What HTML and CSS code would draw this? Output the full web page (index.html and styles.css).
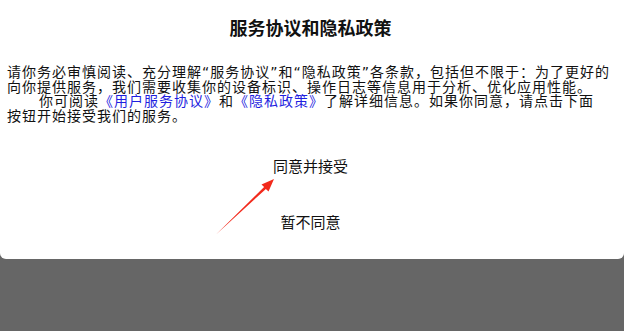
FILE: index.html
```html
<!DOCTYPE html>
<html lang="zh-CN">

<head>
    <meta charset="UTF-8">
    <meta name="viewport" content="width=device-width, initial-scale=1.0">
    <title>服务协议和隐私政策</title>
    <link rel="stylesheet" href="styles.css">
</head>

<body>
    <div class="dialog">
        <h1 class="title">服务协议和隐私政策</h1>
        <div class="content">
            <p>请你务必审慎阅读、充分理解<span class="q">“</span>服务协议<span class="q">”</span>和<span class="q">“</span>隐私政策<span class="q">”</span>各条款，包括但不限于：为了更好的向你提供服务，我们需要收集你的设备标识、操作日志等信息用于分析、优化应用性能。</p>
            <p class="indent">你可阅读<a href="#">《用户服务协议》</a>和<a href="#">《隐私政策》</a>了解详细信息。如果你同意，请点击下面<br>按钮开始接受我们的服务。</p>
        </div>
        <div class="actions">
            <button class="btn">同意并接受</button>
            <button class="btn">暂不同意</button>
        </div>
    </div>

    <!-- annotation arrow drawn over the dialog -->
    <svg class="arrow" width="624" height="331" viewBox="0 0 624 331">
        <polygon points="216,234.5 264.1,187.1 261.5,184.4 274,179 268.5,191.6 265.9,188.9" fill="#f22a1c" />
    </svg>
</body>

</html>
```

FILE: styles.css
```css
body {
    font-family: "Noto Sans CJK SC", "Noto Sans", sans-serif;
    background-color: #666666;
    margin: 0;
    padding: 0;
    height: 331px;
    overflow: hidden;
}

.dialog {
    background-color: #fff;
    border-radius: 0 0 6px 6px;
    padding: 15px 10px 9px 7px;
    color: #111;
}

.title {
    font-size: 18px;
    font-weight: bold;
    line-height: 24px;
    text-align: center;
    margin: 0 0 25px 0;
}

.content {
    font-size: 14px;
    letter-spacing: 1px;
    line-height: 14.5px;
}

.content p {
    margin: 0;
}

.content .q {
    font-family: "DejaVu Sans", sans-serif;
    line-height: 0;
}

.content .indent {
    text-indent: 32px;
}

.content a {
    color: #1f1fe0;
    text-decoration: none;
}

.actions {
    display: flex;
    flex-direction: column;
    margin-top: 15.5px;
}

.btn {
    height: 56px;
    border: none;
    background: none;
    font-family: inherit;
    font-size: 15px;
    color: #111;
    padding: 0;
    cursor: pointer;
}

.arrow {
    position: absolute;
    left: 0;
    top: 0;
    pointer-events: none;
}
```
